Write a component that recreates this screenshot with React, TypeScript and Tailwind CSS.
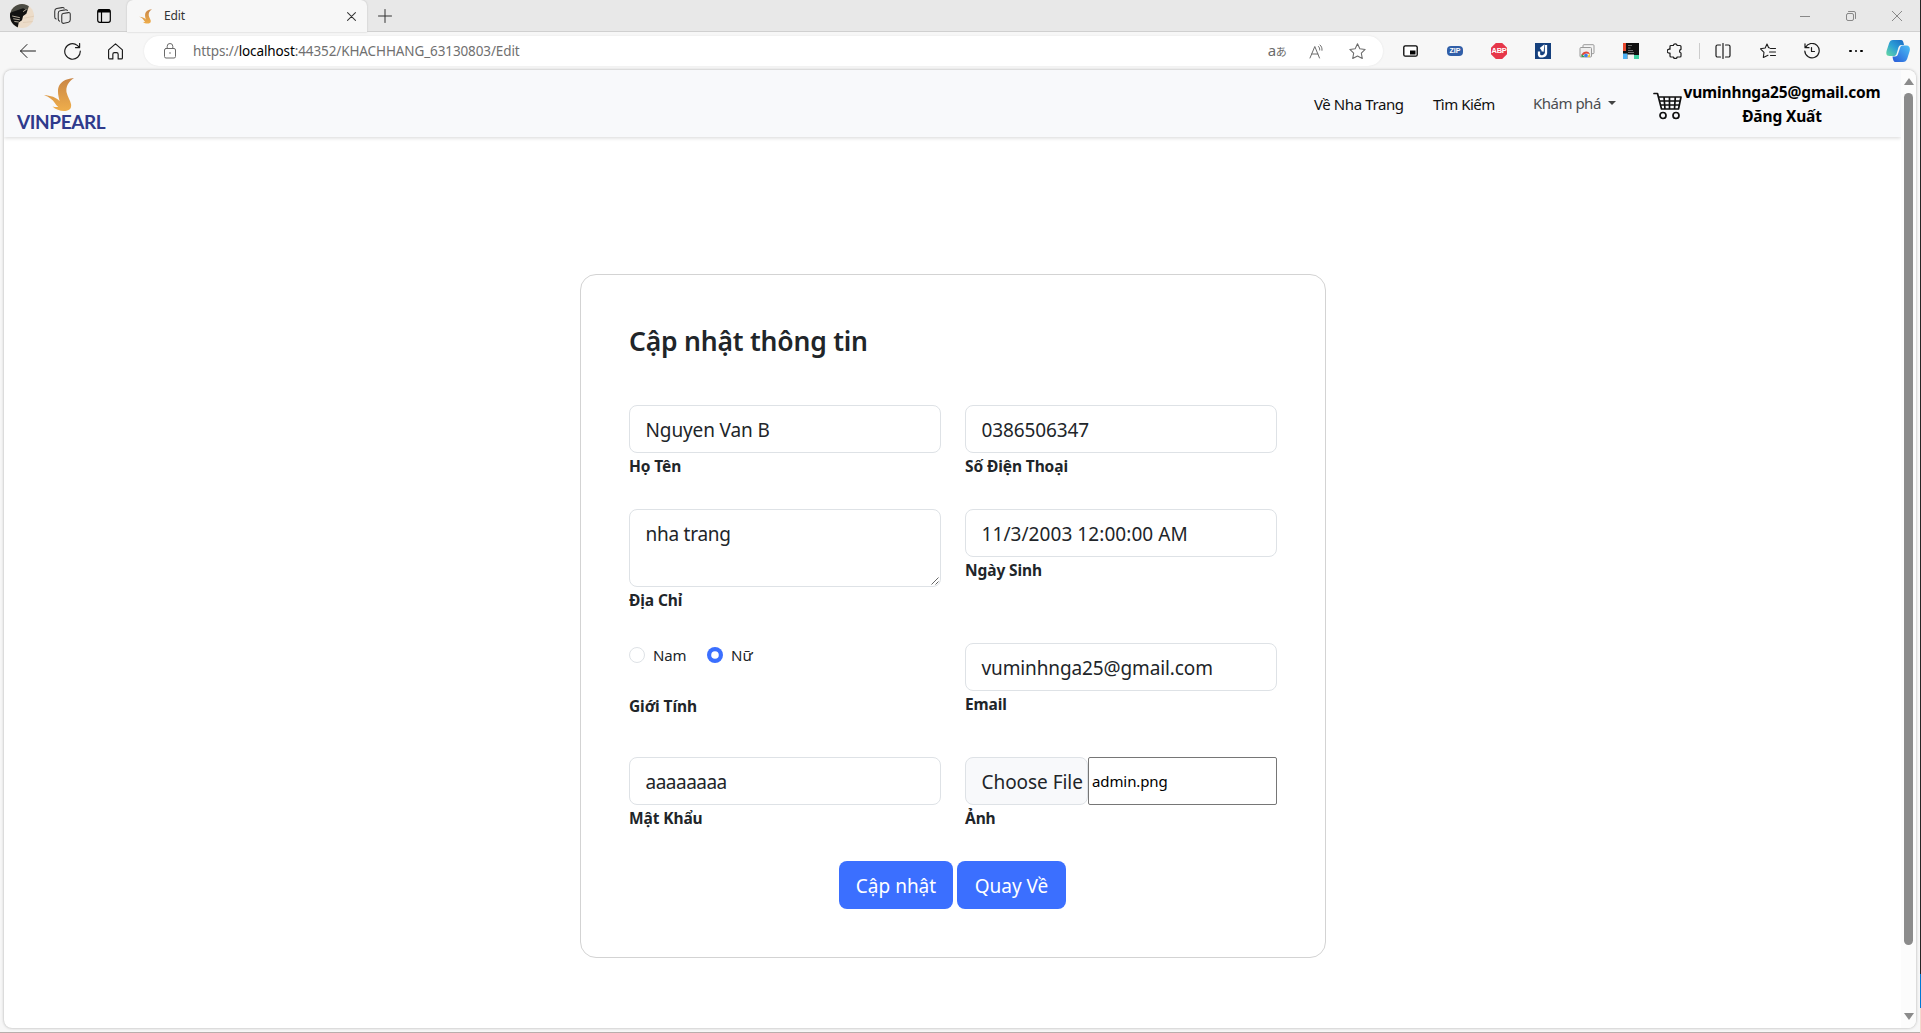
import React from 'react';

type P = { children: React.ReactNode; className?: string; vb?: string };

function Icon({ children, className = '', vb = '0 0 16 16' }: P) {
  return (
    <svg viewBox={vb} className={`block shrink-0 ${className}`} fill="none" stroke="currentColor" strokeWidth="1" strokeLinecap="round" strokeLinejoin="round">
      {children}
    </svg>
  );
}

/** Fixed-width slot that centres one toolbar item. */
function Slot({ children, className }: { children: React.ReactNode; className: string }) {
  return <div className={`flex h-full shrink-0 items-center justify-center ${className}`}>{children}</div>;
}

function Flame({ className }: { className: string }) {
  return (
    <svg viewBox="0 0 30 33" className={`block shrink-0 ${className}`}>
      <defs>
        <linearGradient id="flame" x1="0" y1="0" x2="0" y2="1">
          <stop offset="0" stopColor="#c98646" />
          <stop offset="1" stopColor="#efae4b" />
        </linearGradient>
      </defs>
      <path fill="url(#flame)" d="M30 0C20.500 .8 15.800 4.500 14.300 10C13.300 14.500 14.800 19.500 15.600 23.200C12.500 19.500 6.500 17.300 0 17.300C5 18.800 8.500 21.500 11 25.300C12.200 27.200 13.300 28.300 14.300 29C12.500 29.200 10.500 28.900 8.500 28.500C12 32 18 33.500 22.500 32.700C26.500 31.800 27.600 29.500 27 26C26.300 22.500 23.500 18.500 22.600 14.500C21.500 9 24.500 3.500 30 0Z" />
    </svg>
  );
}

function TabStrip() {
  return (
    <div className="flex h-8 bg-[#e8e8e8] text-[#333]">
      <div className="flex w-[127px] border-b border-[#d0d0d0]">
        <Slot className="ml-[10px] w-[24px]">
          <svg viewBox="0 0 22 22" className="block size-6">
            <clipPath id="avatar"><circle cx="11" cy="11" r="11" /></clipPath>
            <g clipPath="url(#avatar)">
              <path fill="#ecdcc9" d="M0 0h22v22H0z" />
              <path fill="#4b4b43" d="M0 0h18L16 6 6 11 0 12z" />
              <path fill="#111" d="M0 8L12 4 16 6 15 9 12 11 11 15 8 17 7 22 0 22z" />
              <path stroke="#e9dcc8" strokeWidth=".7" d="M2 11l7 1.500M3 13.500l6 1M4 16l4 .5M12 7l3-2" />
              <path stroke="#d9c2a8" strokeWidth=".5" d="M12 17l10-1M13 13l10-2" />
            </g>
          </svg>
        </Slot>
        <Slot className="ml-[18px] w-[20px]">
          <Icon className="size-[17px]">
            <path d="M8.500 6.200L13.500 5.300C14.600 5.100 15.300 5.700 15.300 6.800V12C15.300 13.200 14.700 14 13.600 14.300L9.500 15.300C8.300 15.600 7.300 15 7.300 13.800V7.900C7.300 7 7.700 6.400 8.500 6.200Z" />
            <path d="M5.300 13.300C4.400 13 4 12.300 4 11.300V5.800C4 4.500 4.700 3.700 5.700 3.500L10.500 2.700C11.500 2.500 12.200 2.700 12.600 3.300M2 11.300C1 11 .7 10.300.7 9.300V4C.7 2.600 1.400 1.800 2.500 1.500L7.500.6C8.500.4 9.200.6 9.600 1.200" />
          </Icon>
        </Slot>
        <Slot className="ml-[22px] w-[20px]">
          <svg viewBox="0 0 14 14" className="block size-[14px]" fill="none" stroke="#000" strokeWidth="1.200">
            <rect x=".7" y=".7" width="12.600" height="12.600" rx="2" />
            <path strokeWidth="3" d="M1 2h12" />
            <path d="M4.500 3v10" />
          </svg>
        </Slot>
      </div>
      <div className="flex w-[240px] items-center rounded-t-[6px] bg-[#f7f7f7] shadow-[0_0_2px_#bbb]">
        <Flame className="ml-[12px] h-[15px] w-[13px]" />
        <span className="ml-[12px] w-[170px] font-['Noto_Sans'] text-[12px] leading-4 tracking-[-0.1px]">Edit</span>
        <Icon vb="0 0 8 8" className="ml-[13px] mt-[1px] size-[9px]"><path strokeWidth=".9" d="M.5.5l7 7M7.500.5l-7 7" /></Icon>
      </div>
      <div className="flex flex-1 border-b border-[#d0d0d0]">
        <Slot className="ml-[10px] w-[15px]"><Icon vb="0 0 14 14" className="size-[14px]"><path d="M7 .5v13M.5 7h13" /></Icon></Slot>
        <div className="mx-auto" />
        <Slot className="w-[46px] text-[#888]"><Icon vb="0 0 10 10" className="size-[10px]"><path d="M0 5.500h10" /></Icon></Slot>
        <Slot className="w-[46px] text-[#888]">
          <Icon vb="0 0 10 10" className="size-[10px]"><rect x=".5" y="2.500" width="7" height="7" rx="1.500" /><path d="M2.500 .5H8A1.500 1.500 0 0 1 9.500 2V7.500" /></Icon>
        </Slot>
        <Slot className="w-[46px] text-[#888]"><Icon vb="0 0 10 10" className="size-[10px]"><path d="M0 0l10 10M10 0L0 10" /></Icon></Slot>
      </div>
    </div>
  );
}

function AddressBar() {
  return (
    <div className="flex h-[30px] w-[1239px] items-center rounded-full bg-white text-[#6b6b6b] shadow-[0_0_2px_#e2e2e2]">
      <div className="ml-[20px] w-3">
        <Icon vb="0 0 12 16" className="h-4 w-3">
          <rect x=".5" y="5.500" width="11" height="9.500" rx="1.500" /><path d="M3.200 5.500V3.300a2.800 2.800 0 0 1 5.600 0V5.500" /><circle cx="6" cy="10" r=".8" fill="currentColor" stroke="none" />
        </Icon>
      </div>
      <div className="ml-[17px] flex-1 whitespace-nowrap font-['Noto_Sans'] text-[13.500px] leading-5 tracking-[-0.11px] text-[#707070]">
        https://<span className="text-black">localhost</span>:44352/KHACHHANG_63130803/Edit
      </div>
      <div className="flex h-full w-[126px]">
        <Slot className="w-[40px]"><span className="whitespace-nowrap font-['Noto_Sans','Noto_Sans_CJK_JP',sans-serif] text-[15px] leading-4 tracking-[-0.5px]">a<span className="text-[11px]">あ</span></span></Slot>
        <Slot className="w-[40px]">
          <Icon className="size-4"><path d="M1 15L5.800 3.500L10.500 15M2.700 11h6.200M9.500 3.500C10.500 4.500 10.800 5.500 10.700 7M11 2C12.500 3.300 13.200 5 13 7.300" /></Icon>
        </Slot>
        <Slot className="w-[40px]">
          <Icon className="size-[17px]"><path d="M8 .8l2.200 4.600 5 .7-3.600 3.500.9 5L8 12.200 3.500 14.600l.9-5L.8 6.100l5-.7z" /></Icon>
        </Slot>
      </div>
    </div>
  );
}

function Toolbar() {
  return (
    <div className="flex h-[38px] items-center text-[#1c1c1c]">
      <Slot className="ml-[6px] w-[44px]"><Icon className="size-4"><path d="M.5 8h15M7 1.500L.5 8 7 14.500" /></Icon></Slot>
      <Slot className="w-[44px]"><Icon className="size-[17px]"><path strokeWidth="1.100" d="M15.300 7.500A7.300 7.300 0 1 1 12.500 2.200L14.500 4M14.700.5V4.300H10.800" /></Icon></Slot>
      <Slot className="w-[43px]"><Icon className="size-[17px]"><path strokeWidth="1.100" d="M1.500 6.500L8 .8l6.500 5.700V14a1 1 0 0 1-1 1H10.500V10.500a1.500 1.500 0 0 0-1.500-1.500H7A1.500 1.500 0 0 0 5.500 10.500V15H2.500a1 1 0 0 1-1-1z" /></Icon></Slot>
      <div className="ml-[7px]"><AddressBar /></div>
      <Slot className="ml-[6px] w-[43px]">
        <svg viewBox="0 0 15 12" className="block h-3 w-[15px]"><rect x=".8" y=".8" width="13.400" height="10.400" rx="1.500" fill="#fff" stroke="#000" strokeWidth="1.300" /><path d="M7 5.500h5.500V9.500H7z" /></svg>
      </Slot>
      <Slot className="ml-px w-[44px]"><div className="h-[10px] w-4 rounded-[4px] bg-[#315fa8] text-center font-['Liberation_Sans'] text-[7px] font-bold leading-[10px] text-white">ZIP</div></Slot>
      <Slot className="w-[44px]">
        <div className="flex size-4 items-center justify-center bg-[#e6374a] font-['Liberation_Sans'] text-[7.500px] font-bold leading-none tracking-[-0.3px] text-white [clip-path:polygon(30%_0,70%_0,100%_30%,100%_70%,70%_100%,30%_100%,0_70%,0_30%)]">ABP</div>
      </Slot>
      <Slot className="w-[44px]">
        <svg viewBox="0 0 16 16" className="block size-4"><path fill="#15407d" d="M0 0h16v16H0z" /><path fill="none" stroke="#fff" strokeWidth="2.300" d="M4 8.500V11.500C4.500 14.500 10.500 14 11 10V2M7.500 8.500L8 4 5.500 6" /></svg>
      </Slot>
      <Slot className="w-[44px]">
        <svg viewBox="0 0 16 14" className="block h-[14px] w-4">
          <rect x="4" y=".7" width="11" height="9" rx="1" fill="#f5f5f5" stroke="#999" /><rect x="1" y="3.500" width="11.500" height="9.500" rx="1" fill="#eee" stroke="#999" />
          <path fill="#e04a3c" d="M2.500 12A4.500 4.500 0 0 1 11 10L7 9.500z" /><path fill="#2ca24d" d="M2.500 13V10L6 13z" /><path fill="#f5c52c" d="M8 13l3-3.500V13z" /><circle cx="7" cy="11.500" r="1.800" fill="#3d7ee6" />
        </svg>
      </Slot>
      <Slot className="w-[44px]">
        <svg viewBox="0 0 16 16" className="block size-4"><path fill="#111" d="M0 0h16v16H0z" /><path fill="#e8492f" d="M0 0h3v8H0z" /><path fill="#4db1f5" d="M0 10.500h4.500V16H0z" /><path fill="#f4f4f4" d="M4.500 11.500H11V16H4.500z" /><path fill="#3ed0a0" d="M11 12h5v4h-5z" /><path stroke="#999" strokeWidth=".7" d="M5 2.500h4M5 5h2.500M5 7.500h5M5 9.500h6" /></svg>
      </Slot>
      <Slot className="w-[44px]">
        <Icon className="size-4"><path strokeWidth="1.200" d="M4 2.500H6.300A2 2 0 0 1 10.200 2.500H13A1 1 0 0 1 14 3.500V6.300A1.900 1.900 0 0 0 14 10V13A1 1 0 0 1 13 14H10.200A2 2 0 0 1 6.300 14H4A1 1 0 0 1 3 13V10A2 2 0 1 1 3 6.300V3.500A1 1 0 0 1 4 2.500z" /></Icon>
      </Slot>
      <div className="ml-[2px] h-4 w-px bg-[#ccc]" />
      <Slot className="w-[45px]">
        <Icon className="size-4"><path strokeWidth="1.200" d="M5.500 2H2.500A1.500 1.500 0 0 0 1 3.500v9A1.500 1.500 0 0 0 2.500 14H5.500M8 .5v15M10.500 2h3A1.500 1.500 0 0 1 15 3.500v9a1.500 1.500 0 0 1-1.500 1.500h-3" /></Icon>
      </Slot>
      <Slot className="ml-px w-[44px]">
        <Icon className="size-4"><path strokeWidth="1.100" d="M9.500 5L8.500 4.500 7 1 5.200 5 .5 5.800l3.500 3.500-.7 5.200L8 12.200M10.500 5.500h5M9.500 9h6M10.500 12.500h5" /></Icon>
      </Slot>
      <Slot className="w-[44px]">
        <Icon className="size-4"><path strokeWidth="1.200" d="M1.500 4.500A7.200 7.200 0 1 1 .8 8M1 .8V4.700H5M7.500 4.500V8.500H10.500" /></Icon>
      </Slot>
      <Slot className="w-[44px]"><div className="flex gap-[3px]"><i className="size-[2.500px] rounded-full bg-black" /><i className="size-[2.500px] rounded-full bg-black" /><i className="size-[2.500px] rounded-full bg-black" /></div></Slot>
      <Slot className="w-[40px]">
        <svg viewBox="0 0 24 22" className="block h-[22px] w-6">
          <defs>
            <linearGradient id="cpa" x1="1" y1="0" x2="0" y2="1"><stop offset="0" stopColor="#1a69c4" /><stop offset=".5" stopColor="#2c9fd6" /><stop offset="1" stopColor="#67dba0" /></linearGradient>
            <linearGradient id="cpb" x1="1" y1="0" x2="0" y2="1"><stop offset="0" stopColor="#4cc0f5" /><stop offset="1" stopColor="#2859d8" /></linearGradient>
          </defs>
          <path fill="url(#cpa)" d="M7 0H15C17 0 17.500 2 18 5H15.500C13.500 5 12.700 6.500 12 9L10.500 14C10 15.500 9 16 7.500 16H3.500C0 16 0 13 .7 10.500L3 3.500C3.800 1 5 0 7 0Z" />
          <path fill="url(#cpb)" d="M16.500 5.500H20.500C24 5.500 24.300 9 23.500 11.500L21.300 18.500C20.500 21 19 22 17 22H9.500C7.500 22 7 20 6.500 16.500H9C11 16.500 11.500 15.500 12 14L14 8C14.500 6.500 15 5.500 16.500 5.500Z" />
        </svg>
      </Slot>
    </div>
  );
}

function Cart() {
  return (
    <svg viewBox="0 0 29 28" className="block h-7 w-[29px] shrink-0" fill="none" stroke="#111" strokeWidth="1.700" strokeLinejoin="round" strokeLinecap="round">
      <path d="M1 1.500H4.500L8.500 17H25.500L28 5H5.500M6.500 9H27M7.500 13H26.300M11 5L12 17M16.500 5V17M22.300 5L21.500 17" />
      <circle cx="10" cy="23.500" r="3" /><circle cx="23" cy="23.500" r="3" />
    </svg>
  );
}

function SiteNav() {
  return (
    <nav className="flex h-[67px] items-center bg-[#f8f9fb] font-['Noto_Sans'] text-[15px] leading-6 text-[#111] shadow-[0_1px_4px_rgba(0,0,0,0.16)]">
      <div className="ml-[13px] flex w-[89px] flex-col">
        <Flame className="ml-[27px] mt-px h-[33px] w-[30px]" />
        <div className="mt-[2px] font-['Lato'] text-[19px] font-bold leading-[18px] tracking-[-0.4px] text-[#2f3a8c]">VINPEARL</div>
      </div>
      <div className="flex-1" />
      <span className="w-[119px] whitespace-nowrap tracking-[-0.4px]">Về Nha Trang</span>
      <span className="w-[100px] whitespace-nowrap tracking-[-0.5px]">Tìm Kiếm</span>
      <span className="mt-[-2px] w-[75px] whitespace-nowrap tracking-[-0.5px] text-[#4b4d50]">Khám phá</span>
      <i className="mt-[-2px] h-0 w-0 border-x-4 border-t-4 border-x-transparent border-t-[#444]" />
      <div className="ml-[37px] mt-1"><Cart /></div>
      <div className="mr-[19px] flex w-[200px] flex-col items-center whitespace-nowrap pt-px text-[15.500px] font-bold text-black">
        <span className="tracking-[-0.15px]">vuminhnga25@gmail.com</span>
        <span className="tracking-[-0.15px]">Đăng Xuất</span>
      </div>
    </nav>
  );
}

function Field({ label, children }: { label: string; children: React.ReactNode }) {
  return (
    <div className="w-[312px]">
      {children}
      <div className="h-6 pt-px font-['Noto_Sans'] text-[15.500px] font-bold leading-6 tracking-[-0.1px]">{label}</div>
    </div>
  );
}

function Box({ value, className = 'h-12 tracking-[-0.12px]' }: { value: string; className?: string }) {
  return (
    <div className={`rounded-lg border border-[#dee2e6] px-[15.500px] pt-[9px] text-[19px] leading-[30px] ${className}`}>{value}</div>
  );
}

function EditForm() {
  return (
    <section className="h-[684px] w-[746px] rounded-[16px] border border-[#d3d3d3] px-12 pt-12">
      <h3 className="text-[26.500px] font-semibold leading-9 tracking-[-0.2px]">Cập nhật thông tin</h3>
      <div className="mt-[46px] flex gap-6">
        <Field label="Họ Tên"><Box value="Nguyen Van B" /></Field>
        <Field label="Số Điện Thoại"><Box value="0386506347" /></Field>
      </div>
      <div className="mt-8 flex gap-6">
        <Field label="Địa Chỉ">
          <div className="relative">
            <Box value="nha trang" className="h-[78px] tracking-[-0.25px]" />
            <svg viewBox="0 0 8 8" className="absolute bottom-[2px] right-[2px] size-2" stroke="#555" strokeWidth=".9"><path d="M.5 7.500l7-7M4.500 7.500l3-3" /></svg>
          </div>
        </Field>
        <Field label="Ngày Sinh"><Box value="11/3/2003 12:00:00 AM" className="h-12 tracking-[0.07px]" /></Field>
      </div>
      <div className="mt-8 flex h-[82px] gap-6">
        <Field label="Giới Tính">
          <div className="flex h-[50px] items-start text-[15px] leading-6">
            <span className="mt-1 size-4 rounded-full border border-[#dee2e6]" />
            <span className="ml-2 w-[54px] tracking-[-0.2px]">Nam</span>
            <svg viewBox="0 0 16 16" className="mt-1 block size-4"><circle cx="8" cy="8" r="8" fill="#3b6fff" /><circle cx="8" cy="8" r="3.800" fill="#fff" /></svg>
            <span className="ml-2">Nữ</span>
          </div>
        </Field>
        <Field label="Email"><Box value="vuminhnga25@gmail.com" /></Field>
      </div>
      <div className="mt-8 flex gap-6">
        <Field label="Mật Khẩu"><Box value="aaaaaaaa" className="h-12 tracking-[-0.5px]" /></Field>
        <Field label="Ảnh">
          <div className="flex h-12">
            <div className="w-[123px] whitespace-nowrap rounded-lg border border-[#dee2e6] bg-[#f8f9fb] pl-[15.500px] pt-[9px] text-[19px] leading-[30px] tracking-[-0.05px]">Choose File</div>
            <div className="w-[189px] rounded-[2px] border border-[#767676] pl-[3px] text-[15px] leading-[46px] tracking-[-0.1px] text-black">admin.png</div>
          </div>
        </Field>
      </div>
      <div className="mt-8 flex gap-1 pl-[210px] text-[19px] leading-[30px] text-white">
        <div className="h-12 w-[114px] rounded-lg bg-[#3b6fff] pt-[10px] text-center">Cập nhật</div>
        <div className="h-12 w-[109px] rounded-lg bg-[#3b6fff] pt-[10px] text-center">Quay Về</div>
      </div>
    </section>
  );
}

export default function App() {
  return (
    <div className="flex h-[1033px] w-[1921px] overflow-hidden">
      <div className="flex w-[1920px] flex-col border-b border-[#b8aeac] bg-[#f7f7f7]">
        <TabStrip />
        <Toolbar />
        <div className="ml-[4px] flex h-[958px] w-[1912px] overflow-hidden rounded-[8px] bg-white shadow-[0_0_3px_#aaa]">
          <main className="w-[1897px] font-['Noto_Sans'] text-[#212529]">
            <SiteNav />
            <div className="ml-[576px] mt-[137px]"><EditForm /></div>
          </main>
          <div className="flex w-[15px] flex-col items-center bg-[#fcfcfc]">
            <i className="mt-[8px] h-0 w-0 border-x-[5px] border-b-[7px] border-x-transparent border-b-[#8b8b8b]" />
            <div className="mt-2 h-[852px] w-[9px] rounded-full bg-[#8b8b8b]" />
            <i className="mt-[68px] h-0 w-0 border-x-[5px] border-t-[7px] border-x-transparent border-t-[#8b8b8b]" />
          </div>
        </div>
      </div>
      <div className="flex w-px flex-col">
        <div className="h-[974px] bg-[#262626]" />
        <div className="h-[34px] bg-[#0078d4]" />
        <div className="flex-1 bg-[#f3d9cd]" />
      </div>
    </div>
  );
}
